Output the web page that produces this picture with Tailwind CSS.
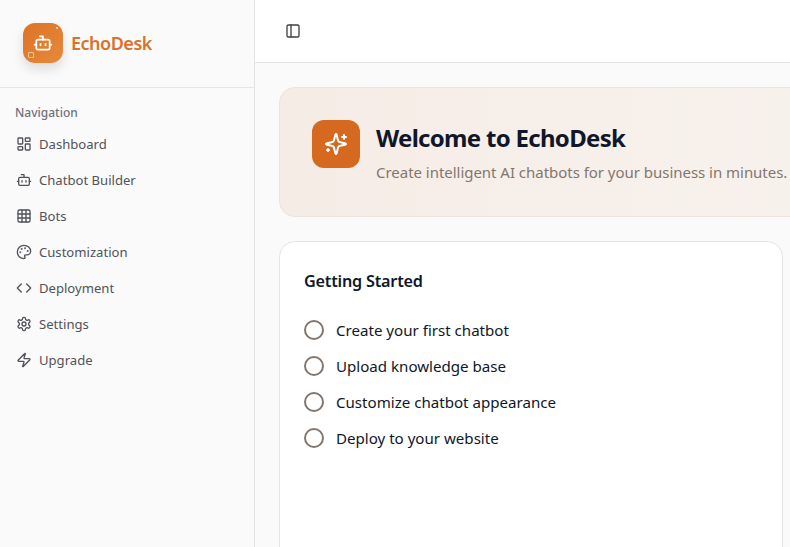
<!DOCTYPE html>
<html lang="en">
<head>
  <meta charset="UTF-8" />
  <meta name="viewport" content="width=device-width, initial-scale=1.0" />
  <title>EchoDesk</title>
  <script src="https://cdn.jsdelivr.net/npm/@tailwindcss/browser@4"></script>
</head>
<body class="bg-[#fafafa] font-['Noto_Sans',sans-serif] text-[#0f172a] overflow-hidden">
  <div class="flex h-[547px] w-[790px] overflow-hidden">
    <!-- sidebar -->
    <aside class="w-[255px] shrink-0 border-r border-[#e5e3e1] bg-[#fafafa]">
      <div class="flex h-[88px] items-center gap-2 border-b border-[#e5e5e5] pb-[2px] pl-[23px] pr-4">
        <div class="relative flex h-10 w-10 items-center justify-center rounded-[12px] bg-gradient-to-br from-[#dd7324] to-[#e58a3c] shadow-[0_6px_12px_rgba(0,0,0,0.12)]">
          <svg class="h-5 w-5 text-white" viewBox="0 0 24 24" fill="none" stroke="currentColor" stroke-width="2" stroke-linecap="round" stroke-linejoin="round"><path d="M12 8V4H8"/><rect width="16" height="12" x="4" y="8" rx="2"/><path d="M2 14h2"/><path d="M20 14h2"/><path d="M15 13v2"/><path d="M9 13v2"/></svg>
          <span class="absolute right-[5px] top-[4px] h-[2px] w-[2px] rounded-full bg-white/70"></span>
          <span class="absolute bottom-[5px] left-[5px] h-[6px] w-[6px] rounded-[1px] border border-white/50"></span>
        </div>
        <span class="text-[18px] font-semibold leading-7 tracking-[-0.5px] text-[#d9722a]">EchoDesk</span>
      </div>
      <nav class="pt-[16px]">
        <div class="mb-[4px] px-[15px] text-[12px] font-medium leading-[18px] text-[#71717a]">Navigation</div>
        <ul class="text-[13.1px] text-[#52525b]">
          <li class="flex h-9 items-center gap-[7px] px-4">
            <svg class="h-4 w-4 shrink-0" viewBox="0 0 24 24" fill="none" stroke="currentColor" stroke-width="2" stroke-linecap="round" stroke-linejoin="round"><rect width="7" height="9" x="3" y="3" rx="1"/><rect width="7" height="5" x="14" y="3" rx="1"/><rect width="7" height="9" x="14" y="12" rx="1"/><rect width="7" height="5" x="3" y="16" rx="1"/></svg>
            <span class="pt-[2px]">Dashboard</span>
          </li>
          <li class="flex h-9 items-center gap-[7px] px-4">
            <svg class="h-4 w-4 shrink-0" viewBox="0 0 24 24" fill="none" stroke="currentColor" stroke-width="2" stroke-linecap="round" stroke-linejoin="round"><path d="M12 8V4H8"/><rect width="16" height="12" x="4" y="8" rx="2"/><path d="M2 14h2"/><path d="M20 14h2"/><path d="M15 13v2"/><path d="M9 13v2"/></svg>
            <span class="pt-[2px]">Chatbot Builder</span>
          </li>
          <li class="flex h-9 items-center gap-[7px] px-4">
            <svg class="h-4 w-4 shrink-0" viewBox="0 0 24 24" fill="none" stroke="currentColor" stroke-width="2" stroke-linecap="round" stroke-linejoin="round"><rect width="18" height="18" x="3" y="3" rx="2"/><path d="M3 9h18"/><path d="M3 15h18"/><path d="M9 3v18"/><path d="M15 3v18"/></svg>
            <span class="pt-[2px]">Bots</span>
          </li>
          <li class="flex h-9 items-center gap-[7px] px-4">
            <svg class="h-4 w-4 shrink-0" viewBox="0 0 24 24" fill="none" stroke="currentColor" stroke-width="2" stroke-linecap="round" stroke-linejoin="round"><circle cx="13.5" cy="6.5" r=".5" fill="currentColor"/><circle cx="17.5" cy="10.5" r=".5" fill="currentColor"/><circle cx="8.5" cy="7.5" r=".5" fill="currentColor"/><circle cx="6.5" cy="12.5" r=".5" fill="currentColor"/><path d="M12 2C6.5 2 2 6.5 2 12s4.5 10 10 10c.926 0 1.648-.746 1.648-1.688 0-.437-.18-.835-.437-1.125-.29-.289-.438-.652-.438-1.125a1.64 1.64 0 0 1 1.668-1.668h1.996c3.051 0 5.555-2.503 5.555-5.554C21.965 6.012 17.461 2 12 2z"/></svg>
            <span class="pt-[2px]">Customization</span>
          </li>
          <li class="flex h-9 items-center gap-[7px] px-4">
            <svg class="h-4 w-4 shrink-0" viewBox="0 0 24 24" fill="none" stroke="currentColor" stroke-width="2" stroke-linecap="round" stroke-linejoin="round"><path d="m16 18 6-6-6-6"/><path d="m8 6-6 6 6 6"/></svg>
            <span class="pt-[2px]">Deployment</span>
          </li>
          <li class="flex h-9 items-center gap-[7px] px-4">
            <svg class="h-4 w-4 shrink-0" viewBox="0 0 24 24" fill="none" stroke="currentColor" stroke-width="2" stroke-linecap="round" stroke-linejoin="round"><path d="M12.22 2h-.44a2 2 0 0 0-2 2v.18a2 2 0 0 1-1 1.73l-.43.25a2 2 0 0 1-2 0l-.15-.08a2 2 0 0 0-2.73.73l-.22.38a2 2 0 0 0 .73 2.73l.15.1a2 2 0 0 1 1 1.72v.51a2 2 0 0 1-1 1.74l-.15.09a2 2 0 0 0-.73 2.73l.22.38a2 2 0 0 0 2.73.73l.15-.08a2 2 0 0 1 2 0l.43.25a2 2 0 0 1 1 1.73V20a2 2 0 0 0 2 2h.44a2 2 0 0 0 2-2v-.18a2 2 0 0 1 1-1.73l.43-.25a2 2 0 0 1 2 0l.15.08a2 2 0 0 0 2.73-.73l.22-.39a2 2 0 0 0-.73-2.73l-.15-.08a2 2 0 0 1-1-1.74v-.5a2 2 0 0 1 1-1.74l.15-.09a2 2 0 0 0 .73-2.73l-.22-.38a2 2 0 0 0-2.73-.73l-.15.08a2 2 0 0 1-2 0l-.43-.25a2 2 0 0 1-1-1.73V4a2 2 0 0 0-2-2z"/><circle cx="12" cy="12" r="3"/></svg>
            <span class="pt-[2px]">Settings</span>
          </li>
          <li class="flex h-9 items-center gap-[7px] px-4">
            <svg class="h-4 w-4 shrink-0" viewBox="0 0 24 24" fill="none" stroke="currentColor" stroke-width="2" stroke-linecap="round" stroke-linejoin="round"><path d="M4 14a1 1 0 0 1-.78-1.63l9.9-10.2a.5.5 0 0 1 .86.46l-1.92 6.02A1 1 0 0 0 13 10h7a1 1 0 0 1 .78 1.63l-9.9 10.2a.5.5 0 0 1-.86-.46l1.92-6.02A1 1 0 0 0 11 14z"/></svg>
            <span class="pt-[2px]">Upgrade</span>
          </li>
        </ul>
      </nav>
    </aside>

    <!-- main -->
    <div class="min-w-0 flex-1">
      <header class="flex h-[63px] items-center border-b border-[#e8e4e1] bg-white pl-[30px]">
        <svg class="h-4 w-4 text-[#3f3f46]" viewBox="0 0 24 24" fill="none" stroke="currentColor" stroke-width="2" stroke-linecap="round" stroke-linejoin="round"><rect width="18" height="18" x="3" y="3" rx="2"/><path d="M9 3v18"/></svg>
      </header>
      <main class="w-[1032px] p-6">
        <section class="mb-6 flex h-[130px] items-start gap-4 rounded-2xl border border-[#ebe3dd] bg-gradient-to-r from-[#f6ece6] to-[#f8f6f3] px-8 pt-8">
          <div class="flex h-12 w-12 shrink-0 items-center justify-center rounded-xl bg-[#d4691f]">
            <svg class="h-6 w-6 text-white" viewBox="0 0 24 24" fill="none" stroke="currentColor" stroke-width="2" stroke-linecap="round" stroke-linejoin="round"><path d="M9.937 15.5A2 2 0 0 0 8.5 14.063l-6.135-1.582a.5.5 0 0 1 0-.962L8.5 9.936A2 2 0 0 0 9.937 8.5l1.582-6.135a.5.5 0 0 1 .963 0L14.063 8.5A2 2 0 0 0 15.5 9.937l6.135 1.581a.5.5 0 0 1 0 .964L15.5 14.063a2 2 0 0 0-1.437 1.437l-1.582 6.135a.5.5 0 0 1-.963 0z"/><path d="M20 3v4"/><path d="M22 5h-4"/><path d="M4 17v2"/><path d="M5 18H3"/></svg>
          </div>
          <div>
            <h1 class="text-[24px] font-bold leading-9 tracking-[-0.7px] text-[#0f172a]">Welcome to EchoDesk</h1>
            <p class="mt-1 text-[15px] leading-6 tracking-[-0.03px] text-[#82776f]">Create intelligent AI chatbots for your business in minutes.</p>
          </div>
        </section>
        <section class="h-[400px] w-[504px] rounded-2xl border border-[#e8e4e1] bg-white px-6 pt-[25px]">
          <h2 class="text-[16.2px] font-semibold leading-7 tracking-[-0.2px] text-[#0f172a]">Getting Started</h2>
          <ul class="mt-[17px] text-[15.1px] text-[#0f172a]">
            <li class="flex h-9 items-center gap-3"><span class="h-5 w-5 shrink-0 rounded-full border-2 border-[#82776f]"></span>Create your first chatbot</li>
            <li class="flex h-9 items-center gap-3"><span class="h-5 w-5 shrink-0 rounded-full border-2 border-[#82776f]"></span>Upload knowledge base</li>
            <li class="flex h-9 items-center gap-3"><span class="h-5 w-5 shrink-0 rounded-full border-2 border-[#82776f]"></span>Customize chatbot appearance</li>
            <li class="flex h-9 items-center gap-3"><span class="h-5 w-5 shrink-0 rounded-full border-2 border-[#82776f]"></span>Deploy to your website</li>
          </ul>
        </section>
      </main>
    </div>
  </div>
</body>
</html>
